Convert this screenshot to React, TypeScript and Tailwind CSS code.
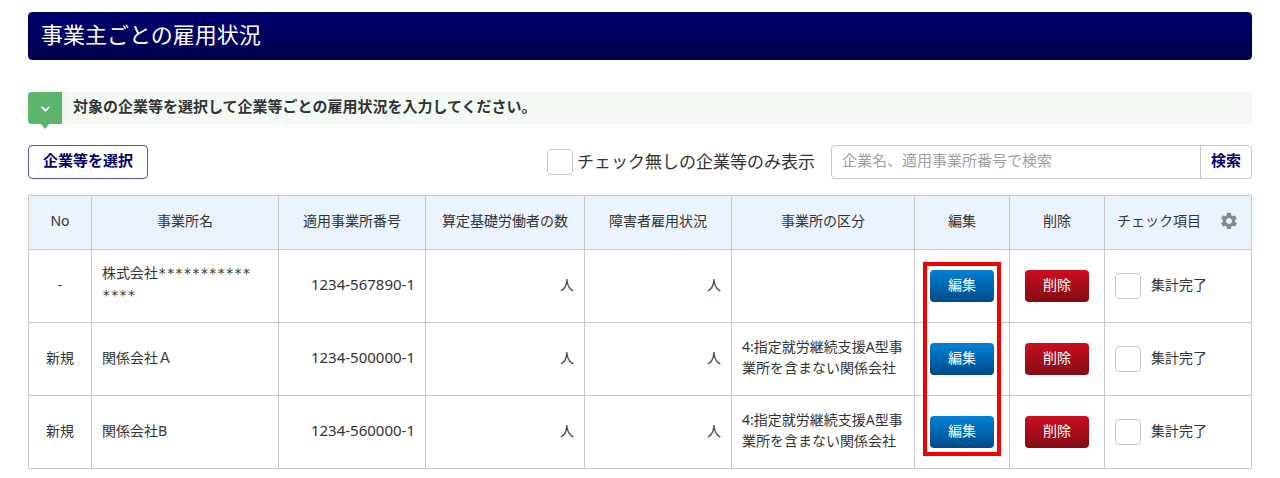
import { FaChevronDown } from 'react-icons/fa6';
import { MdSettings } from 'react-icons/md';

type Office = {
  id: string;
  no: string;
  name: string;
  mask?: string[];
  number: string;
  category: string;
};

const offices: Office[] = [
  { id: 'parent', no: '-', name: '株式会社', mask: ['***********', '****'], number: '1234-567890-1', category: '' },
  { id: 'a', no: '新規', name: '関係会社Ａ', number: '1234-500000-1', category: '4:指定就労継続支援A型事業所を含まない関係会社' },
  { id: 'b', no: '新規', name: '関係会社B', number: '1234-560000-1', category: '4:指定就労継続支援A型事業所を含まない関係会社' },
];

const checkboxClass = 'size-[26px] shrink-0 appearance-none rounded border border-[#c8c8c8] bg-white checked:bg-[#0080d4]';
const cellClass = 'border border-[#c8c8c8] px-[10px]';
const textCellClass = `${cellClass} pb-1`;
const actionClass = 'h-8 w-16 rounded bg-linear-to-b pb-0.5 text-sm text-white';

function OfficeRow({ office, highlight }: { office: Office; highlight: boolean }) {
  return (
    <tr className="h-[73px]">
      <td className={`${textCellClass} text-center`}>{office.no}</td>
      <td className={textCellClass}>
        {office.name}
        {office.mask && (
          <span className="font-['DejaVu_Sans_Mono',monospace]">
            {office.mask[0]}
            <br />
            {office.mask[1]}
          </span>
        )}
      </td>
      <td className={`${textCellClass} text-right text-[15px]`}>{office.number}</td>
      <td className={`${textCellClass} text-right`}>人</td>
      <td className={`${textCellClass} text-right`}>人</td>
      <td className={textCellClass}>{office.category}</td>
      <td className={`${cellClass} relative text-center`}>
        <button type="button" className={`${actionClass} from-[#0082d6] to-[#004b88]`}>
          編集
        </button>
        {highlight && (
          <div className="pointer-events-none absolute inset-x-2 top-3 z-10 h-[194px] border-4 border-[#f50000]" />
        )}
      </td>
      <td className={`${cellClass} text-center`}>
        <button type="button" className={`${actionClass} from-[#cb0f1f] to-[#830b14]`}>
          削除
        </button>
      </td>
      <td className={cellClass}>
        <label className="flex items-center gap-[10px]">
          <input type="checkbox" name={`done-${office.id}`} className={checkboxClass} />
          <span className="pb-1">集計完了</span>
        </label>
      </td>
    </tr>
  );
}

export default function App() {
  return (
    <main className="bg-white px-7 py-3 font-['Noto_Sans','Noto_Sans_CJK_JP',sans-serif] text-[#333]" lang="ja">
      <h1 className="rounded border border-[#00004f] bg-linear-to-b from-[#000070] to-[#00004d] px-3 pt-1 pb-2 text-[22px] leading-[34px] text-white">
        事業主ごとの雇用状況
      </h1>

      <div className="mt-8 flex items-center rounded bg-[#f3faf4]">
        <div className="relative flex h-8 w-[34px] shrink-0 items-center justify-center rounded-l bg-[#5db56c] text-white shadow-[0_0_8px_rgba(0,0,0,0.08)]">
          <FaChevronDown className="size-[9px] stroke-current stroke-[48]" />
          <div className="absolute top-full left-1/2 -translate-x-1/2 border-x-4 border-t-[5px] border-x-transparent border-t-[#5db56c]" />
        </div>
        <p className="pb-1 pl-[11px] text-[15px] leading-6 font-bold">
          対象の企業等を選択して企業等ごとの雇用状況を入力してください。
        </p>
      </div>

      <div className="mt-[21px] flex items-center">
        <button
          type="button"
          className="h-[34px] w-[120px] rounded border border-[#5a5a96] pb-1 text-[15px] font-bold text-[#000068]"
        >
          企業等を選択
        </button>
        <label className="ml-auto flex items-center gap-1 text-[17px]">
          <input type="checkbox" name="unchecked-only" className={checkboxClass} />
          <span>チェック無しの企業等のみ表示</span>
        </label>
        <form className="ml-4 flex h-[34px] w-[421px] rounded border border-[#c8c8c8]" onSubmit={(e) => e.preventDefault()}>
          <input
            type="text"
            name="keyword"
            aria-label="企業名、適用事業所番号で検索"
            placeholder="企業名、適用事業所番号で検索"
            className="min-w-0 flex-1 px-[10px] pb-1 text-[15px] outline-none placeholder:text-[#a0a0a0]"
          />
          <button type="submit" className="w-[51px] border-l border-[#c8c8c8] pb-1 text-[15px] font-bold text-[#000068]">
            検索
          </button>
        </form>
      </div>

      <table className="mt-4 w-full table-fixed border-collapse text-sm leading-[21px]">
        <colgroup>
          <col className="w-[63px]" />
          <col className="w-[187px]" />
          <col className="w-[147px]" />
          <col className="w-[159px]" />
          <col className="w-[147px]" />
          <col className="w-[183px]" />
          <col className="w-[95px]" />
          <col className="w-[95px]" />
          <col />
        </colgroup>
        <thead>
          <tr className="h-[54px] bg-[#ebf4fc] *:border *:border-[#c8c8c8] *:pb-1 *:font-normal">
            <th>No</th>
            <th>事業所名</th>
            <th>適用事業所番号</th>
            <th>算定基礎労働者の数</th>
            <th>障害者雇用状況</th>
            <th>事業所の区分</th>
            <th>編集</th>
            <th>削除</th>
            <th>
              <div className="flex items-center justify-between px-3">
                <span>チェック項目</span>
                <button type="button" aria-label="チェック項目の設定" className="text-[#888]">
                  <MdSettings className="size-5" />
                </button>
              </div>
            </th>
          </tr>
        </thead>
        <tbody>
          {offices.map((office, index) => (
            <OfficeRow key={office.id} office={office} highlight={index === 0} />
          ))}
        </tbody>
      </table>
    </main>
  );
}
